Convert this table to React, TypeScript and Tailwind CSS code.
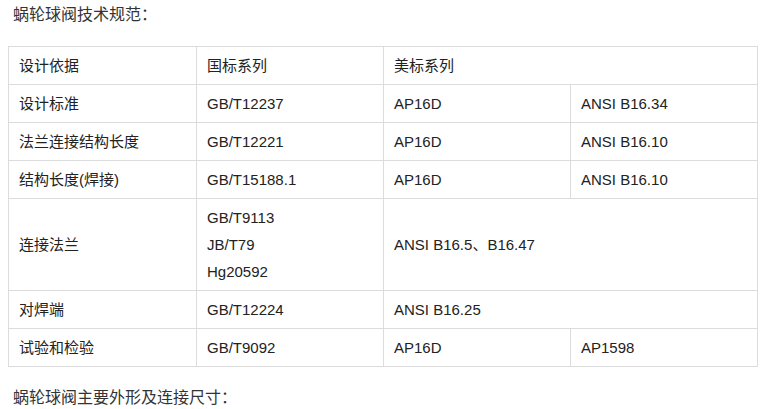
// 蜗轮球阀技术规范 — 表格页面
import React from 'react';

const cell = 'border border-[#dcdcdc] px-[10px] py-[5px] align-middle';

const App: React.FC = () => {
    return (
        <div className="bg-white text-[#222] text-[15px] leading-[27px] font-['Liberation_Sans','Noto_Sans_CJK_SC',sans-serif] w-[762px] h-[409px] overflow-hidden">
            {/* 标题 */}
            <p className="pl-[13px] pt-[3px] text-[16px] leading-[24px] text-[#333]">蜗轮球阀技术规范：</p>

            {/* 规范表 */}
            <div className="pl-[8px] pt-[19px]">
                <table className="border-collapse table-fixed w-[749px]">
                    <colgroup>
                        <col className="w-[188px]" />
                        <col className="w-[187px]" />
                        <col className="w-[187px]" />
                        <col className="w-[187px]" />
                    </colgroup>
                    <tbody>
                        <tr>
                            <td className={cell}>设计依据</td>
                            <td className={cell}>国标系列</td>
                            <td className={cell} colSpan={2}>美标系列</td>
                        </tr>
                        <tr>
                            <td className={cell}>设计标准</td>
                            <td className={cell}>GB/T12237</td>
                            <td className={cell}>AP16D</td>
                            <td className={cell}>ANSI B16.34</td>
                        </tr>
                        <tr>
                            <td className={cell}>法兰连接结构长度</td>
                            <td className={cell}>GB/T12221</td>
                            <td className={cell}>AP16D</td>
                            <td className={cell}>ANSI B16.10</td>
                        </tr>
                        <tr>
                            <td className={cell}>结构长度(焊接)</td>
                            <td className={cell}>GB/T15188.1</td>
                            <td className={cell}>AP16D</td>
                            <td className={cell}>ANSI B16.10</td>
                        </tr>
                        <tr>
                            <td className={cell}>连接法兰</td>
                            <td className={cell}>
                                GB/T9113<br />JB/T79<br />Hg20592
                            </td>
                            <td className={cell} colSpan={2}>ANSI B16.5、B16.47</td>
                        </tr>
                        <tr>
                            <td className={cell}>对焊端</td>
                            <td className={cell}>GB/T12224</td>
                            <td className={cell} colSpan={2}>ANSI B16.25</td>
                        </tr>
                        <tr>
                            <td className={cell}>试验和检验</td>
                            <td className={cell}>GB/T9092</td>
                            <td className={cell}>AP16D</td>
                            <td className={cell}>AP1598</td>
                        </tr>
                    </tbody>
                </table>
            </div>

            {/* 尺寸标题 */}
            <p className="pl-[13px] pt-[19px] text-[16px] leading-[24px] text-[#333]">蜗轮球阀主要外形及连接尺寸：</p>
        </div>
    );
};

export default App;
